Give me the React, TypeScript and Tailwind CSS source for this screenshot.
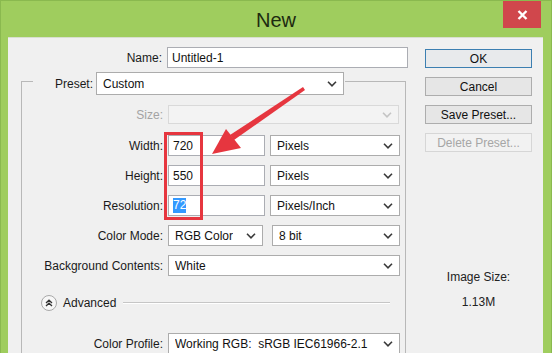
import React from "react";

const FONT = { fontFamily: '"Liberation Sans", Arial, sans-serif' };

function Chevron({ muted = false }: { muted?: boolean }) {
  return (
    <svg width="10" height="6" viewBox="0 0 10 6" className="shrink-0">
      <path
        d="M1 0.8 L5 4.8 L9 0.8"
        fill="none"
        stroke={muted ? "#c4c4c4" : "#3a3a3a"}
        strokeWidth="1.6"
      />
    </svg>
  );
}

function Select({
  value,
  className = "",
  disabled = false,
}: {
  value: string;
  className?: string;
  disabled?: boolean;
}) {
  return (
    <div
      className={
        "flex items-center justify-between pl-[6px] pr-[6px] border text-[12px] " +
        (disabled ? "bg-[#f3f3f3] border-[#d9d9d9]" : "bg-white border-[#acacac] text-[#111]") +
        " " +
        className
      }
    >
      <span className="overflow-hidden whitespace-pre">{value}</span>
      <Chevron muted={disabled} />
    </div>
  );
}

function Field({ children, className = "" }: { children?: React.ReactNode; className?: string }) {
  return (
    <div className={"flex items-center pl-[4px] bg-white border border-[#abadb3] text-[12px] text-[#111] " + className}>
      {children}
    </div>
  );
}

function Label({ text, muted = false }: { text: string; muted?: boolean }) {
  return (
    <span className={"w-[141px] shrink-0 text-right text-[12px] " + (muted ? "text-[#a3a3a3]" : "text-[#1a1a1a]")}>
      {text}
    </span>
  );
}

function Button({ text, variant = "normal" }: { text: string; variant?: "default" | "normal" | "disabled" }) {
  const cls =
    variant === "default"
      ? "border-[#3c7fb1] bg-[#e8eaec] text-[#111]"
      : variant === "disabled"
      ? "border-[#d6d6d6] bg-[#f2f2f2] text-[#a6a6a6]"
      : "border-[#adadad] bg-[#e6e6e6] text-[#111]";
  return (
    <div className={"h-[19px] flex items-center justify-center border text-[12px] " + cls}>{text}</div>
  );
}

export default function App() {
  return (
    <div
      className="relative w-[552px] h-[353px] overflow-hidden bg-[#9fcd5e] border-x border-t border-[#8ab94f]"
      style={FONT}
    >
      {/* Title bar */}
      <div className="h-[36px] flex items-center justify-center">
        <span className="text-[20px] text-[#1d2a10] mt-[2px]">New</span>
      </div>
      <div className="absolute top-0 left-[502px] w-[38px] h-[27px] bg-[#d0474c] flex items-center justify-center">
        <svg width="11" height="10" viewBox="0 0 11 10">
          <path d="M1.5 1 L9.5 9 M9.5 1 L1.5 9" stroke="#fff" strokeWidth="2.4" />
        </svg>
      </div>

      {/* Client area */}
      <div className="ml-[7px] mr-[8px] h-[317px] bg-[#f0f0f0] border-t border-[#d8dfcf] flex">
        {/* Left panel */}
        <div className="w-[409px] pl-[13px] pt-[9px]">
          <div className="flex items-center gap-[5px]">
            <Label text="Name:" />
            <Field className="w-[241px] h-[21px]">Untitled-1</Field>
          </div>

          {/* Group box */}
          <div className="mt-[13px] w-[385px] h-[300px] border-l border-t border-r border-[#b8b8b8] pb-4">
            <div className="-mt-[10px] ml-[11px] w-[312px] flex items-center bg-[#f0f0f0] pl-[22px]">
              <span className="text-[12px] text-[#1a1a1a] mr-[3px]">Preset:</span>
              <Select value="Custom" className="w-[248px] h-[23px]" />
            </div>

            <div className="mt-[10px] flex items-center gap-[5px]">
              <Label text="Size:" muted />
              <Select value="" disabled className="w-[231px] h-[19px]" />
            </div>

            <div className="mt-[11px] flex flex-col gap-[9px]">
              <div className="flex items-center gap-[5px]">
                <Label text="Width:" />
                <Field className="w-[97px] h-[21px]">720</Field>
                <Select value="Pixels" className="w-[130px] h-[21px]" />
              </div>
              <div className="flex items-center gap-[5px]">
                <Label text="Height:" />
                <Field className="w-[97px] h-[21px]">550</Field>
                <Select value="Pixels" className="w-[130px] h-[21px]" />
              </div>
              <div className="flex items-center gap-[5px]">
                <Label text="Resolution:" />
                <Field className="w-[97px] h-[21px]">
                  <span className="bg-[#3399ff] text-white leading-[15px]">72</span>
                </Field>
                <Select value="Pixels/Inch" className="w-[130px] h-[21px]" />
              </div>
              <div className="flex items-center gap-[5px]">
                <Label text="Color Mode:" />
                <Select value="RGB Color" className="w-[95px] h-[21px]" />
                <Select value="8 bit" className="ml-[4px] w-[128px] h-[21px]" />
              </div>
              <div className="flex items-center gap-[5px]">
                <Label text="Background Contents:" />
                <Select value="White" className="w-[232px] h-[21px]" />
              </div>
            </div>

            {/* Advanced */}
            <div className="mt-[17px] h-[20px] flex items-center pl-[19px] pr-[15px]">
              <div className="w-[16px] h-[16px] rounded-full border border-[#a9a9a9] bg-[#f7f7f7] flex items-center justify-center">
                <svg width="8" height="8" viewBox="0 0 8 8">
                  <path d="M1 4 L4 1.2 L7 4 M1 7 L4 4.2 L7 7" fill="none" stroke="#333" strokeWidth="1.3" />
                </svg>
              </div>
              <span className="ml-[6px] text-[12px] text-[#1a1a1a]">Advanced</span>
              <div className="ml-[7px] flex-1 border-t border-[#c6c6c6] border-b border-b-white" />
            </div>

            <div className="mt-[20px] flex items-center gap-[5px]">
              <Label text="Color Profile:" />
              <Select value="Working RGB:  sRGB IEC61966-2.1" className="w-[232px] h-[21px]" />
            </div>
          </div>
        </div>

        {/* Right column */}
        <div className="ml-[8px] w-[107px] pt-[11px] flex flex-col">
          <div className="flex flex-col gap-[9px]">
            <Button text="OK" variant="default" />
            <Button text="Cancel" />
            <Button text="Save Preset..." />
            <Button text="Delete Preset..." variant="disabled" />
          </div>
          <div className="mt-[116px] text-center text-[12px] text-[#222]">Image Size:</div>
          <div className="mt-[7px] text-center text-[12px] text-[#222]">1.13M</div>
        </div>
      </div>

      {/* Red annotation box */}
      <div className="absolute left-[163px] top-[131px] w-[39px] h-[88px] border-[3px] border-[#e6363f]" />

      {/* Red arrow */}
      <svg className="absolute left-0 top-0 pointer-events-none" width="552" height="353" viewBox="0 0 552 353">
        <polygon points="302,86 304,89 233,139 229,134" fill="#e6363f" />
        <polygon points="211,153 225,128 240,147" fill="#e6363f" />
      </svg>
    </div>
  );
}
